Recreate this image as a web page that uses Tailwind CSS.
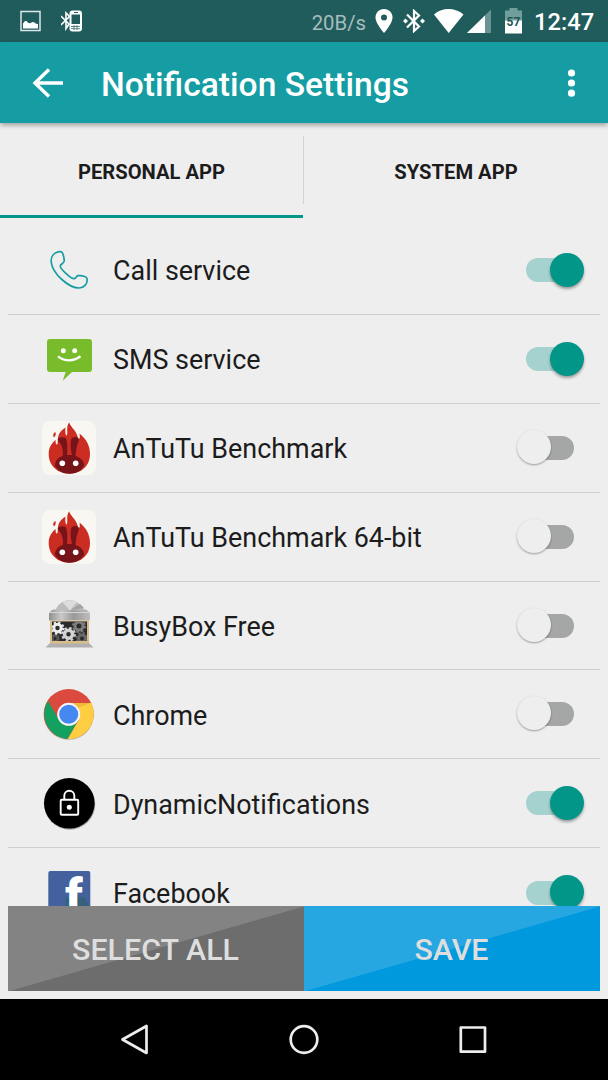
<!DOCTYPE html>
<html lang="en">
<head>
    <meta charset="UTF-8">
    <meta name="viewport" content="width=device-width, initial-scale=1.0">
    <title>Notification Settings</title>
    <script src="https://cdn.jsdelivr.net/npm/@tailwindcss/browser@4"></script>
</head>
<body class="flex h-[1080px] w-[608px] flex-col overflow-hidden bg-[#eeeeee] font-['Roboto',sans-serif] text-[#1c1c1c]">

    <!-- status bar -->
    <div class="flex h-[42px] shrink-0 items-center bg-[#215c5c] pl-5 pr-[14px] text-white">
        <svg class="h-[22px] w-[21px] shrink-0" viewBox="0 0 21 22">
            <rect x="1" y="1.500" width="19" height="19" fill="none" stroke="#fff" stroke-opacity=".85" stroke-width="1.500"/>
            <path d="M3 18.500V13.500l1.500-2L6 10.700 8.500 13l1.500.3 2.500-1.300 2 .5 1.500 1.300 2 .2v4.500z" fill="#fff"/>
        </svg>
        <svg class="ml-5 h-[22px] w-[22px] shrink-0" viewBox="0 0 22 22" fill="none" stroke="#fff">
            <path d="M0 6l8 8-3 4.500V3L8.500 6.500 0 15" stroke-width="1.600"/>
            <rect x="8.500" y=".5" width="12.500" height="21" rx="3" fill="#fff" stroke="none"/>
            <path d="M10.500 4.500h8.500v9.500h-8.500z" fill="#215c5c" stroke="none"/>
            <path d="M13 2.500h4" stroke="#215c5c"/>
            <path d="M10 16.500h9M10 18.700h9M13 15v5M16 15v5" stroke="#215c5c" stroke-width=".7"/>
        </svg>
        <span class="ml-auto mr-[9px] mt-[5px] text-[20.3px] leading-none text-[#a6bebe]">20B/s</span>
        <svg class="h-6 w-[18px] shrink-0" viewBox="0 0 18 24">
            <path d="M9 0C4 0 .5 3.700.5 8.500.5 14.500 9 24 9 24s8.500-9.500 8.500-15.500C17.500 3.700 14 0 9 0z" fill="#fff"/>
            <circle cx="9" cy="8.500" r="3" fill="#215c5c"/>
        </svg>
        <svg class="ml-[10px] h-6 w-[22px] shrink-0" viewBox="0 0 22 24" fill="none" stroke="#fff" stroke-width="2.200">
            <path d="M4 5.500l12 12L11 22V2l5 4.500L4 18.500"/>
            <path d="M2.500 9.500L5 12l-2.500 2.500L0 12zM19.500 9.500L22 12l-2.500 2.500L17 12z" fill="#fff" stroke="none"/>
        </svg>
        <svg class="ml-2 h-6 w-8 shrink-0" viewBox="0 0 32 24">
            <path d="M1 5.500Q7 0 15.500 0T30.500 5.500L15.700 24z" fill="#fff"/>
        </svg>
        <svg class="ml-[2px] h-6 w-[25px] shrink-0" viewBox="0 0 25 24">
            <path d="M24 .5V24H0z" fill="#6b9393"/>
            <path d="M18 6.500V24H0z" fill="#fff"/>
        </svg>
        <svg class="ml-[13px] h-[26px] w-[17px] shrink-0" viewBox="0 0 17 26">
            <path d="M4.500 0h8v2.500H17V13H0V2.500h4.500z" fill="#6f9e9d"/>
            <path d="M0 12.500h17V25.500H0z" fill="#fff"/>
            <text x="8.500" y="17.800" text-anchor="middle" font-family="Roboto" font-size="12" font-weight="700" fill="#1f5756">57</text>
        </svg>
        <span class="ml-3 mt-[3px] w-[60px] whitespace-nowrap text-[23.7px] font-medium leading-none">12:47</span>
    </div>

    <!-- toolbar -->
    <header class="relative z-10 flex h-[81px] shrink-0 items-center bg-[#169da3] pl-8 pr-[28px] text-white shadow-[0_2px_5px_rgba(0,0,0,0.35)]">
        <svg class="h-8 w-8" viewBox="0 0 32 32" fill="none" stroke="#fff" stroke-width="3.400">
            <path d="M31 16H3M17 2.500L3 16 17 29.500"/>
        </svg>
        <h1 class="ml-[37px] mt-[4px] text-[33.6px] font-medium leading-none">Notification Settings</h1>
        <svg class="ml-auto h-7 w-[17px]" viewBox="0 0 17 28" fill="#fff">
            <circle cx="8.500" cy="4" r="3.600"/>
            <circle cx="8.500" cy="14" r="3.600"/>
            <circle cx="8.500" cy="24.200" r="3.600"/>
        </svg>
    </header>

    <!-- tabs -->
    <nav class="flex h-[95px] shrink-0 text-[20.2px] font-bold">
        <div class="flex w-[303px] items-center justify-center border-b-[3px] border-[#029688] pt-[6px]">PERSONAL APP</div>
        <div class="mt-[13px] h-[68px] w-px bg-[#d3d3d3]"></div>
        <div class="flex flex-1 items-center justify-center pb-[3px] pt-[6px]">SYSTEM APP</div>
    </nav>

    <!-- app list -->
    <main class="mx-2 h-[688px] shrink-0 overflow-hidden pt-[8px] text-[26.9px]">
        <div class="flex h-[88.9px] items-center border-b border-[#cecece] pl-[34px] pr-[26px]">
            <svg class="h-[54px] w-[54px]" viewBox="0 0 54 54" fill="none" stroke="#169da3" stroke-width="1.700" stroke-linejoin="round">
                <path d="M17.300 8.700C12 9.500 8.700 13.500 9.200 19 10.500 31 27 45 37 45c5 0 8.500-4 8.200-9-.2-1.500-1-2-2.500-2.500-2-.7-5-1-6.700-.8-1.700.3-2 2.500-3.700 3C29 36 18.500 26 18.300 23.200c-.2-1.800 3.700-3 3.900-5.200.2-2-.7-5.500-1.700-8-.5-1.200-1.700-1.500-3.200-1.300z"/>
            </svg>
            <span class="ml-[17px] pt-[3px]">Call service</span>
            <div class="relative ml-auto h-6 w-12 rounded-full bg-[#a5d2cf]">
                <div class="absolute -top-[5px] left-[23.5px] size-[34px] rounded-full bg-[#029688] shadow-[0_2px_3px_rgba(0,0,0,0.35)]"></div>
            </div>
        </div>
        <div class="flex h-[88.9px] items-center border-b border-[#cecece] pl-[34px] pr-[26px]">
            <svg class="h-[54px] w-[54px]" viewBox="0 0 54 54">
                <path d="M8 7h39a3 3 0 0 1 3 3v27a3 3 0 0 1-3 3H30l-9.300 8.700 3-8.700H8a3 3 0 0 1-3-3V10a3 3 0 0 1 3-3z" fill="#78bc2c"/>
                <circle cx="21.300" cy="18.700" r="2.500" fill="#fff"/>
                <circle cx="32.700" cy="18.700" r="2.500" fill="#fff"/>
                <path d="M16 24.300Q27 32.500 38.500 24.300" fill="none" stroke="#fff" stroke-width="2.300"/>
            </svg>
            <span class="ml-[17px] pt-[3px]">SMS service</span>
            <div class="relative ml-auto h-6 w-12 rounded-full bg-[#a5d2cf]">
                <div class="absolute -top-[5px] left-[23.5px] size-[34px] rounded-full bg-[#029688] shadow-[0_2px_3px_rgba(0,0,0,0.35)]"></div>
            </div>
        </div>
        <div class="flex h-[88.9px] items-center border-b border-[#cecece] pl-[34px] pr-[26px]">
            <svg class="h-[54px] w-[54px]" viewBox="0 0 54 54">
                <defs>
                    <g id="antutu">
                        <rect width="54" height="54" rx="8" fill="#f8f7f2"/>
                        <path d="M27.300 1.300C27.500 5 33.500 9 35.300 14.500c.7 2 .7 3.500 1.500 3.500 1.200 0 1.200-3 .7-5.500C44.500 18 48 25 48 33c0 12-9 19.700-20.500 19.700S6.700 45 6.700 33c0-6 2.500-10.500 7-14-.3 3 .2 5 1.500 4.500C17 21 13 13 23.500 6.500c-.5 4 0 8 1.200 8C26.500 13 23.500 6 27.300 1.300z" fill="#cc2d22"/>
                        <path d="M13.500 11c-2.500 1-3 3.500-1.500 5.500 1.700-1.500 2-3 1.500-5.500z" fill="#cc2d22"/>
                        <path d="M12.800 44.500c.7-5.500 4-8.500 8-9.500.7-6.500-1-11.500-5-16-.3-3 6.500-3.700 8.200-1.200 1.500 3 1.500 10 1 16.200h5c-1.500-6.200-2-13.200-.5-16.200 1.500-2.500 7.500-2.200 7.500.8C35.500 24 33.500 29 33.700 35c4.500 1.500 8 4.500 8.600 9.500-3 5.300-8.300 8.200-14.800 8.200s-12-2.900-14.700-8.200z" fill="#77141a"/>
                        <circle cx="20.300" cy="42.300" r="2.800" fill="#fff"/>
                        <circle cx="33.700" cy="42.300" r="2.800" fill="#fff"/>
                    </g>
                </defs>
                <use href="#antutu"/>
            </svg>
            <span class="ml-[17px] pt-[3px]">AnTuTu Benchmark</span>
            <div class="relative ml-auto h-6 w-12 rounded-full bg-[#a5a7a6]">
                <div class="absolute -left-[9.5px] -top-[6px] size-[34px] rounded-full bg-[#eeeeee] shadow-[0_1px_2px_rgba(0,0,0,0.35)]"></div>
            </div>
        </div>
        <div class="flex h-[88.9px] items-center border-b border-[#cecece] pl-[34px] pr-[26px]">
            <svg class="h-[54px] w-[54px]" viewBox="0 0 54 54"><use href="#antutu"/></svg>
            <span class="ml-[17px] pt-[3px]">AnTuTu Benchmark 64-bit</span>
            <div class="relative ml-auto h-6 w-12 rounded-full bg-[#a5a7a6]">
                <div class="absolute -left-[9.5px] -top-[6px] size-[34px] rounded-full bg-[#eeeeee] shadow-[0_1px_2px_rgba(0,0,0,0.35)]"></div>
            </div>
        </div>
        <div class="flex h-[88.9px] items-center border-b border-[#cecece] pl-[34px] pr-[26px]">
            <svg class="h-[54px] w-[54px]" viewBox="0 0 54 54">
                <defs>
                    <linearGradient id="steel" x1="0" x2="1">
                        <stop offset="0" stop-color="#909090"/>
                        <stop offset=".3" stop-color="#c9c9c9"/>
                        <stop offset=".6" stop-color="#999"/>
                        <stop offset="1" stop-color="#bdbdbd"/>
                    </linearGradient>
                    <clipPath id="glass"><path d="M10 22.500h35V42H10z"/></clipPath>
                </defs>
                <path d="M8 44L3.500 48.500H51.500L47 44z" fill="#b0b0b0"/>
                <path d="M11 10.500h33l4 3v8H7v-8z" fill="url(#steel)"/>
                <path d="M13 11.500Q18 1 27.300 1T43 11.500z" fill="#bcbcbc"/>
                <path d="M28 11.500L20 2.700Q28-.5 35 3z" fill="#dcdcdc"/>
                <path d="M28 11.500L38 5l4 4z" fill="#a3a3a3"/>
                <path d="M7 13.500h41" stroke="#d6d6d6"/>
                <path d="M8 21.500h39V44.500H8z" fill="#d8bd88"/>
                <path d="M10 22.500h35V42H10z" fill="#2b2b2b"/>
                <g clip-path="url(#glass)" fill="none">
                    <circle cx="37" cy="27" r="4" stroke="#7d7d7d" stroke-width="3"/>
                    <circle cx="37" cy="27" r="6" stroke="#7d7d7d" stroke-width="2" stroke-dasharray="2.360 2.360"/>
                    <circle cx="40" cy="39.500" r="3.500" stroke="#686868" stroke-width="3"/>
                    <circle cx="40" cy="39.500" r="5.500" stroke="#686868" stroke-width="2" stroke-dasharray="2.160 2.160"/>
                    <circle cx="13" cy="39.500" r="3" stroke="#555" stroke-width="3"/>
                    <circle cx="15.500" cy="29" r="3.700" stroke="#ededed" stroke-width="3"/>
                    <circle cx="15.500" cy="29" r="5.700" stroke="#ededed" stroke-width="2.200" stroke-dasharray="2.240 2.240"/>
                    <circle cx="26.500" cy="35.300" r="4" stroke="#d2d2d2" stroke-width="3.500"/>
                    <circle cx="26.500" cy="35.300" r="6.300" stroke="#d2d2d2" stroke-width="2.200" stroke-dasharray="2.470 2.470"/>
                </g>
            </svg>
            <span class="ml-[17px] pt-[3px]">BusyBox Free</span>
            <div class="relative ml-auto h-6 w-12 rounded-full bg-[#a5a7a6]">
                <div class="absolute -left-[9.5px] -top-[6px] size-[34px] rounded-full bg-[#eeeeee] shadow-[0_1px_2px_rgba(0,0,0,0.35)]"></div>
            </div>
        </div>
        <div class="flex h-[88.9px] items-center border-b border-[#cecece] pl-[34px] pr-[26px]">
            <svg class="h-[54px] w-[54px]" viewBox="0 0 54 54">
                <circle cx="26.700" cy="28" r="25" fill="#000" fill-opacity=".2"/>
                <circle cx="26.700" cy="27" r="25" fill="#db4a3e"/>
                <path d="M6 14A25 25 0 0 0 25.700 52L36.500 33 26.700 27 16.700 32.500z" fill="#14a05f"/>
                <path d="M25.700 52A25 25 0 0 0 49.200 16H26.700L36.700 33z" fill="#fecd41"/>
                <path d="M27 16h22l-14 5z" fill="#f0b838"/>
                <circle cx="26.700" cy="27.300" r="11.500" fill="#f6f6f6"/>
                <circle cx="26.700" cy="27.300" r="9.500" fill="#4688f1"/>
            </svg>
            <span class="ml-[17px] pt-[3px]">Chrome</span>
            <div class="relative ml-auto h-6 w-12 rounded-full bg-[#a5a7a6]">
                <div class="absolute -left-[9.5px] -top-[6px] size-[34px] rounded-full bg-[#eeeeee] shadow-[0_1px_2px_rgba(0,0,0,0.35)]"></div>
            </div>
        </div>
        <div class="flex h-[88.9px] items-center border-b border-[#cecece] pl-[34px] pr-[26px]">
            <svg class="h-[54px] w-[54px]" viewBox="0 0 54 54">
                <circle cx="27.800" cy="28.200" r="25.500" fill="#000" fill-opacity=".3"/>
                <circle cx="27.300" cy="27.300" r="25.300" fill="#000"/>
                <rect x="18.700" y="23.800" width="17.500" height="15" rx="1" fill="none" stroke="#fff" stroke-width="1.900"/>
                <path d="M22.300 23.300v-3.500a5 5 0 0 1 10 0v3.500" fill="none" stroke="#fff" stroke-width="1.900"/>
                <circle cx="27.300" cy="31.300" r="2.500" fill="#fff"/>
            </svg>
            <span class="ml-[17px] pt-[3px]">DynamicNotifications</span>
            <div class="relative ml-auto h-6 w-12 rounded-full bg-[#a5d2cf]">
                <div class="absolute -top-[5px] left-[23.5px] size-[34px] rounded-full bg-[#029688] shadow-[0_2px_3px_rgba(0,0,0,0.35)]"></div>
            </div>
        </div>
        <div class="flex h-[88.9px] items-center pl-[34px] pr-[26px]">
            <svg class="h-[54px] w-[54px]" viewBox="0 0 54 54">
                <rect x="6.300" y="5" width="42" height="42" rx="2" fill="#44619d"/>
                <path d="M24 31l-1 16h25V41l-6-10z" fill="#35617d"/>
                <text x="23.300" y="47" font-family="Roboto" font-size="48" font-weight="900" fill="#fff">f</text>
            </svg>
            <span class="ml-[17px] pt-[3px]">Facebook</span>
            <div class="relative ml-auto h-6 w-12 rounded-full bg-[#a5d2cf]">
                <div class="absolute -top-[6px] left-[23.5px] size-[34px] rounded-full bg-[#029688] shadow-[0_2px_3px_rgba(0,0,0,0.35)]"></div>
            </div>
        </div>
    </main>

    <!-- bottom buttons -->
    <div class="mx-2 mb-2 flex h-[85px] shrink-0 text-[30.4px] font-medium text-[#dedede]">
        <button class="flex-1 bg-[linear-gradient(to_bottom_right,#838383_50%,#6d6d6d_50.5%)] pr-px pt-[2px]">SELECT ALL</button>
        <button class="flex-1 bg-[linear-gradient(to_bottom_right,#26a7e2_50%,#0099de_50.5%)] pr-px pt-[2px]">SAVE</button>
    </div>

    <!-- navigation bar -->
    <div class="flex flex-1 items-center justify-center gap-[137px] bg-black">
        <svg class="h-8 w-8" viewBox="0 0 32 32" fill="none" stroke="#eceeee" stroke-width="2.700" stroke-linejoin="round">
            <path d="M3.500 15.500L27.500 2v27z"/>
        </svg>
        <svg class="h-8 w-8" viewBox="0 0 32 32" fill="none" stroke="#eceeee" stroke-width="2.700">
            <circle cx="16" cy="15.500" r="13.300"/>
        </svg>
        <svg class="h-8 w-8" viewBox="0 0 32 32" fill="none" stroke="#eceeee" stroke-width="2.700" stroke-linejoin="round">
            <rect x="3.800" y="3.500" width="24.200" height="24.200"/>
        </svg>
    </div>
</body>
</html>
